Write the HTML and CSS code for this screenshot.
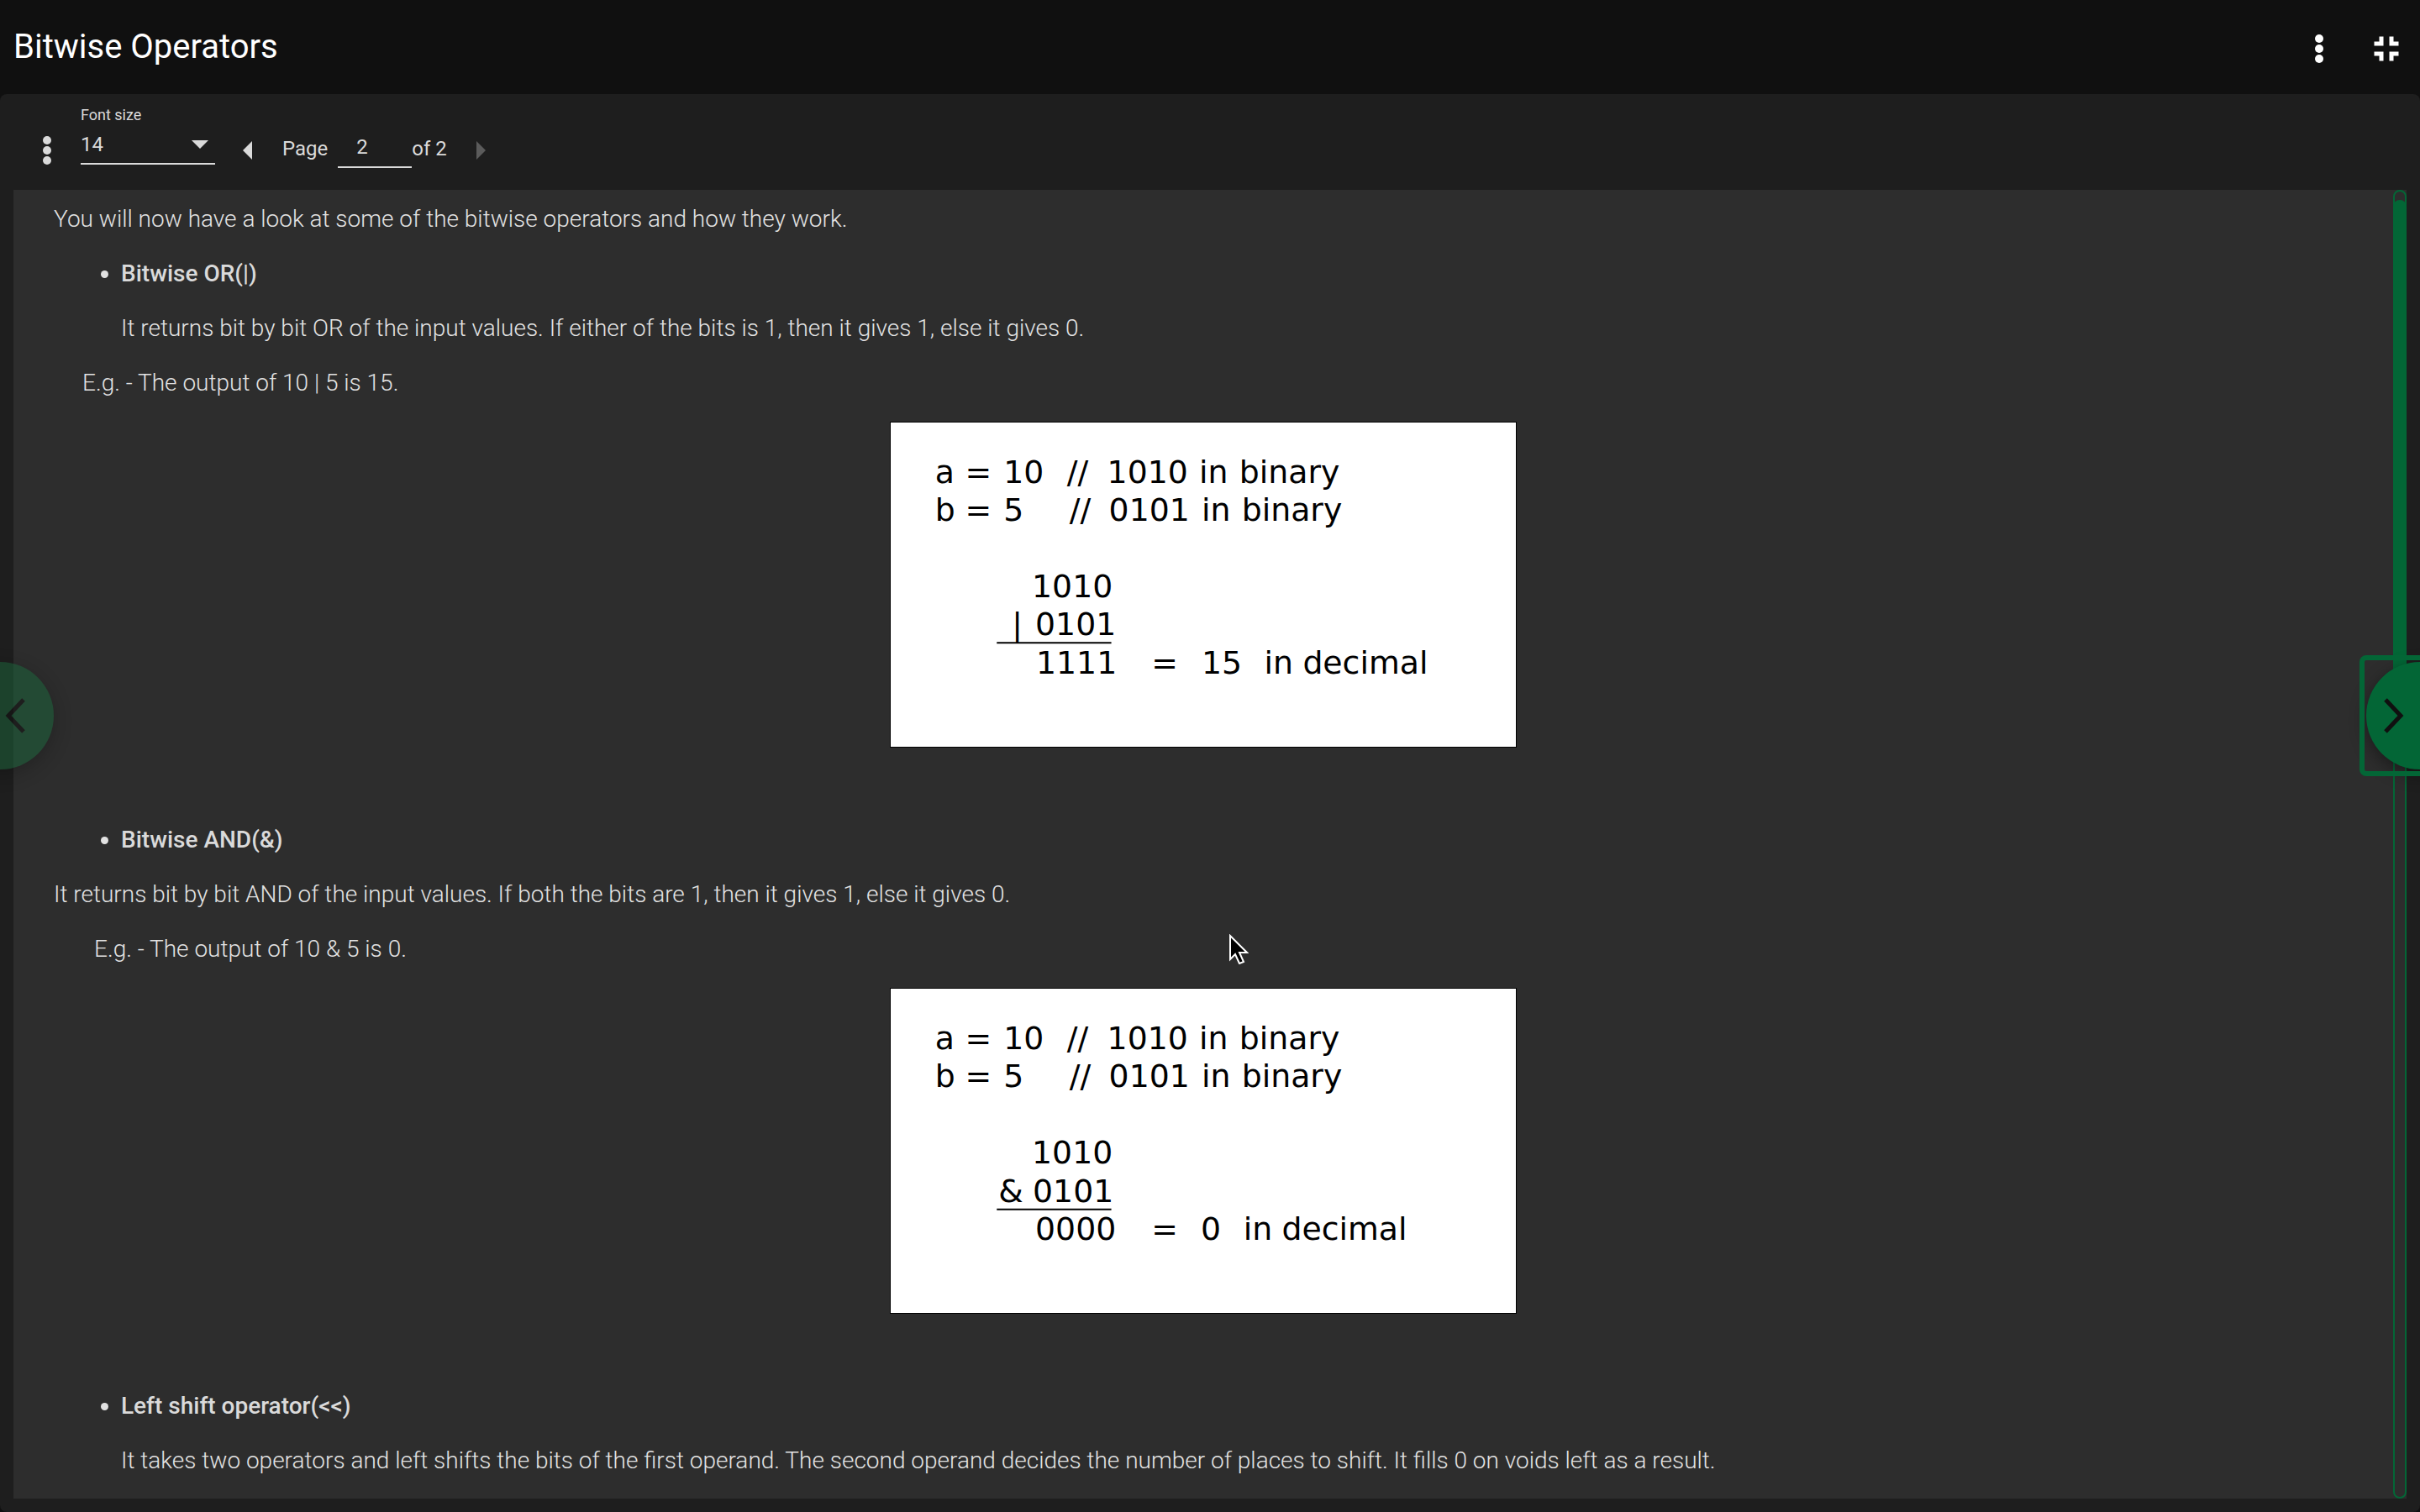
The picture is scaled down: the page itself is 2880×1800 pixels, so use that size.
FILE: index.html
```html
<!DOCTYPE html>
<html lang="en">
<head>
<meta charset="utf-8">
<title>Bitwise Operators</title>
<link rel="stylesheet" href="styles.css">
</head>
<body>
<header class="topbar">
  <h1 class="topbar-title">Bitwise Operators</h1>
  <div class="topbar-actions">
    <button class="icon-button" type="button" aria-label="More options">
      <svg viewBox="0 0 48 48" width="48" height="48" fill="currentColor"><circle cx="24" cy="12" r="5"/><circle cx="24" cy="24" r="5"/><circle cx="24" cy="36" r="5"/></svg>
    </button>
    <button class="icon-button" type="button" aria-label="Exit full screen">
      <svg viewBox="0 0 48 48" width="48" height="48" fill="currentColor"><path d="M15.500 9.500h5v11h-11v-5h6zM27.500 9.500h5v6h6v5h-11zM9.500 27.500h11v11h-5v-6h-6zM27.500 27.500h11v5h-6v6h-5z"/></svg>
    </button>
  </div>
</header>

<main class="viewer">
  <div class="toolbar">
    <button class="icon-button tool-menu" type="button" aria-label="Document menu">
      <svg viewBox="0 0 48 48" width="48" height="48" fill="currentColor"><circle cx="24" cy="12" r="5"/><circle cx="24" cy="24" r="5"/><circle cx="24" cy="36" r="5"/></svg>
    </button>
    <div class="field">
      <label class="field-label" for="font-size">Font size</label>
      <div class="select-wrap">
        <select class="select" id="font-size"><option>12</option><option selected>14</option><option>16</option></select>
        <svg class="select-arrow" viewBox="0 0 20 10" width="20" height="10" fill="currentColor"><path d="M0 0h20L10 10z"/></svg>
      </div>
    </div>
    <button class="page-step" type="button" aria-label="Previous page">
      <svg viewBox="0 0 11 22" width="11" height="22" fill="currentColor"><path d="M11 0v22L0 11z"/></svg>
    </button>
    <label class="page-text" for="page">Page</label>
    <input class="page-input" id="page" type="text" value="2">
    <span class="page-text">of 2</span>
    <button class="page-step page-next" type="button" aria-label="Next page" disabled>
      <svg viewBox="0 0 11 22" width="11" height="22" fill="currentColor"><path d="M0 0v22l11-11z"/></svg>
    </button>
  </div>

  <div class="document">
    <article class="content">
      <p>You will now have a look at some of the bitwise operators and how they work.</p>
      <ul>
        <li><strong>Bitwise OR(|)</strong>
          <p>It returns bit by bit OR of the input values. If either of the bits is 1, then it gives 1, else it gives 0.</p>
        </li>
      </ul>
      <p class="example">E.g. - The output of 10 | 5 is 15.</p>
      <figure class="figure">
        <svg class="diagram" viewBox="0 0 746 388" width="746" height="388">
          <text x="52" y="72">a</text><text x="88" y="72">=</text><text x="134" y="72">10</text><text x="210" y="72">//</text><text x="258" y="72">1010</text><text x="368" y="72">in</text><text x="416" y="72">binary</text>
          <text x="52" y="118">b</text><text x="88" y="118">=</text><text x="134" y="118">5</text><text x="213" y="118">//</text><text x="260" y="118">0101</text><text x="371" y="118">in</text><text x="419" y="118">binary</text>
          <text x="168" y="209">1010</text>
          <text x="144" y="254">|</text><text x="172" y="254">0101</text>
          <path d="M126 263.500H263" stroke="#000" stroke-width="2"/>
          <text x="173" y="301">1111</text><text x="311" y="301">=</text><text x="371" y="301">15</text><text x="446" y="301">in</text><text x="492" y="301">decimal</text>
        </svg>
      </figure>
      <ul>
        <li><strong>Bitwise AND(&amp;)</strong></li>
      </ul>
      <p>It returns bit by bit AND of the input values. If both the bits are 1, then it gives 1, else it gives 0.</p>
      <p class="example example-deep">E.g. - The output of 10 &amp; 5 is 0.</p>
      <figure class="figure">
        <svg class="diagram" viewBox="0 0 746 388" width="746" height="388">
          <text x="52" y="72">a</text><text x="88" y="72">=</text><text x="134" y="72">10</text><text x="210" y="72">//</text><text x="258" y="72">1010</text><text x="368" y="72">in</text><text x="416" y="72">binary</text>
          <text x="52" y="118">b</text><text x="88" y="118">=</text><text x="134" y="118">5</text><text x="213" y="118">//</text><text x="260" y="118">0101</text><text x="371" y="118">in</text><text x="419" y="118">binary</text>
          <text x="168" y="209">1010</text>
          <text x="128" y="255">&amp;</text><text x="169" y="255">0101</text>
          <path d="M126 264H263" stroke="#000" stroke-width="2"/>
          <text x="172" y="301">0000</text><text x="311" y="301">=</text><text x="370" y="301">0</text><text x="421" y="301">in</text><text x="467" y="301">decimal</text>
        </svg>
      </figure>
      <ul>
        <li><strong>Left shift operator(&lt;&lt;)</strong>
          <p>It takes two operators and left shifts the bits of the first operand. The second operand decides the number of places to shift. It fills 0 on voids left as a result.</p>
        </li>
      </ul>
    </article>
    <div class="scroll-track"><div class="scroll-thumb"></div></div>
  </div>
</main>

<button class="nav nav-prev" type="button" aria-label="Previous">
  <svg viewBox="0 0 24 42" width="24" height="42" fill="none" stroke="currentColor" stroke-width="5"><path d="M22 2L4 21l18 19"/></svg>
</button>
<button class="nav nav-next" type="button" aria-label="Next">
  <svg viewBox="0 0 24 42" width="24" height="42" fill="none" stroke="currentColor" stroke-width="5"><path d="M2 2l18 19L2 40"/></svg>
</button>
<svg class="pointer" viewBox="0 0 24 36" width="24" height="36"><path d="M2 2v28l6-6 5 11 5-2-5-11h9z" fill="#000" stroke="#fff" stroke-width="2"/></svg>
</body>
</html>
```
FILE: styles.css
```css
* { box-sizing: border-box; }

body {
  margin: 0;
  height: 100vh;
  display: flex;
  flex-direction: column;
  overflow: hidden;
  background: #101010;
  color: #dadada;
  font-family: Roboto, sans-serif;
  font-size: 28px;
  line-height: 37px;
}

button, input, select {
  margin: 0;
  padding: 0;
  border: 0;
  background: none;
  color: inherit;
  font: inherit;
}

svg { display: block; }

.topbar {
  flex: none;
  height: 112px;
  padding: 0 16px;
  display: flex;
  align-items: center;
  justify-content: space-between;
  color: #fff;
}

.topbar-title {
  margin: 0;
  font-size: 40px;
  font-weight: 400;
  line-height: 48px;
}

.topbar-actions {
  display: flex;
  gap: 32px;
  padding-top: 4px;
}

.viewer {
  flex: 1;
  min-height: 0;
  padding: 0 16px 16px;
  display: flex;
  flex-direction: column;
  border-radius: 8px;
  background: #1e1e1e;
}

.toolbar {
  flex: none;
  height: 114px;
  padding: 16px;
  display: flex;
  align-items: flex-start;
  font-size: 24px;
  line-height: 32px;
}

.tool-menu { margin-top: 27px; }

.field { width: 160px; margin-left: 16px; }

.field-label {
  display: block;
  font-size: 18px;
  line-height: 18px;
}

.select-wrap {
  display: grid;
  align-items: center;
  border-bottom: 2px solid #dadada;
}

.select-wrap > * { grid-area: 1 / 1; }

.select {
  width: 100%;
  height: 48px;
  padding-top: 4px;
  appearance: none;
}

.select-arrow { justify-self: end; margin: 4px 8px 0 0; }

.page-step { margin: 40px 36px 0 33px; }

.page-text { margin-top: 33px; }

.page-input {
  width: 88px;
  height: 56px;
  margin: 16px 0 0 12px;
  padding: 16px 32px 8px 22px;
  border-bottom: 2px solid #dadada;
}

.page-next { margin: 40px 0 0 35px; color: #5b5b5b; }

.document {
  flex: 1;
  min-height: 0;
  display: flex;
  background: #2d2d2d;
}

.content {
  flex: 1;
  padding: 16px 48px;
  overflow: hidden;
  color: #e2e2e2;
  font-weight: 300;
}

.content p, .content ul { margin: 0 0 28px; }
.content ul { padding-left: 80px; }
.content li p { margin-top: 28px; }
.content strong { color: #dadada; font-weight: 500; }

.content .example { margin: 0 0 28px; padding-left: 34px; }
.content .example-deep { padding-left: 48px; }

.figure {
  width: 746px;
  margin: 28px auto 91px;
}

.diagram {
  background: #fff;
  border: 1px solid #000;
  font-family: "DejaVu Sans", sans-serif;
  font-size: 38px;
  font-weight: 400;
}

.scroll-track {
  width: 16px;
  padding: 10px 0;
  border: 2px solid #036636;
  border-radius: 8px;
}

.scroll-thumb {
  height: 40%;
  margin: 0 -2px;
  border-radius: 8px;
  background: #036636;
}

.nav {
  position: absolute;
  top: 788px;
  width: 128px;
  height: 128px;
  display: flex;
  align-items: center;
  border-radius: 50%;
  background: #036636;
  color: #101010;
  box-shadow: 0 6px 20px rgba(0, 0, 0, 0.4);
}

.nav-prev {
  left: -64px;
  padding-left: 70px;
  background: #1b673b;
  opacity: 0.5;
}

.nav-next { right: -64px; padding-left: 21px; }

.nav-next::before {
  content: "";
  position: absolute;
  inset: -8px;
  border: 6px solid #036636;
  border-radius: 8px;
}

.pointer { position: absolute; left: 1462px; top: 1112px; }
```
